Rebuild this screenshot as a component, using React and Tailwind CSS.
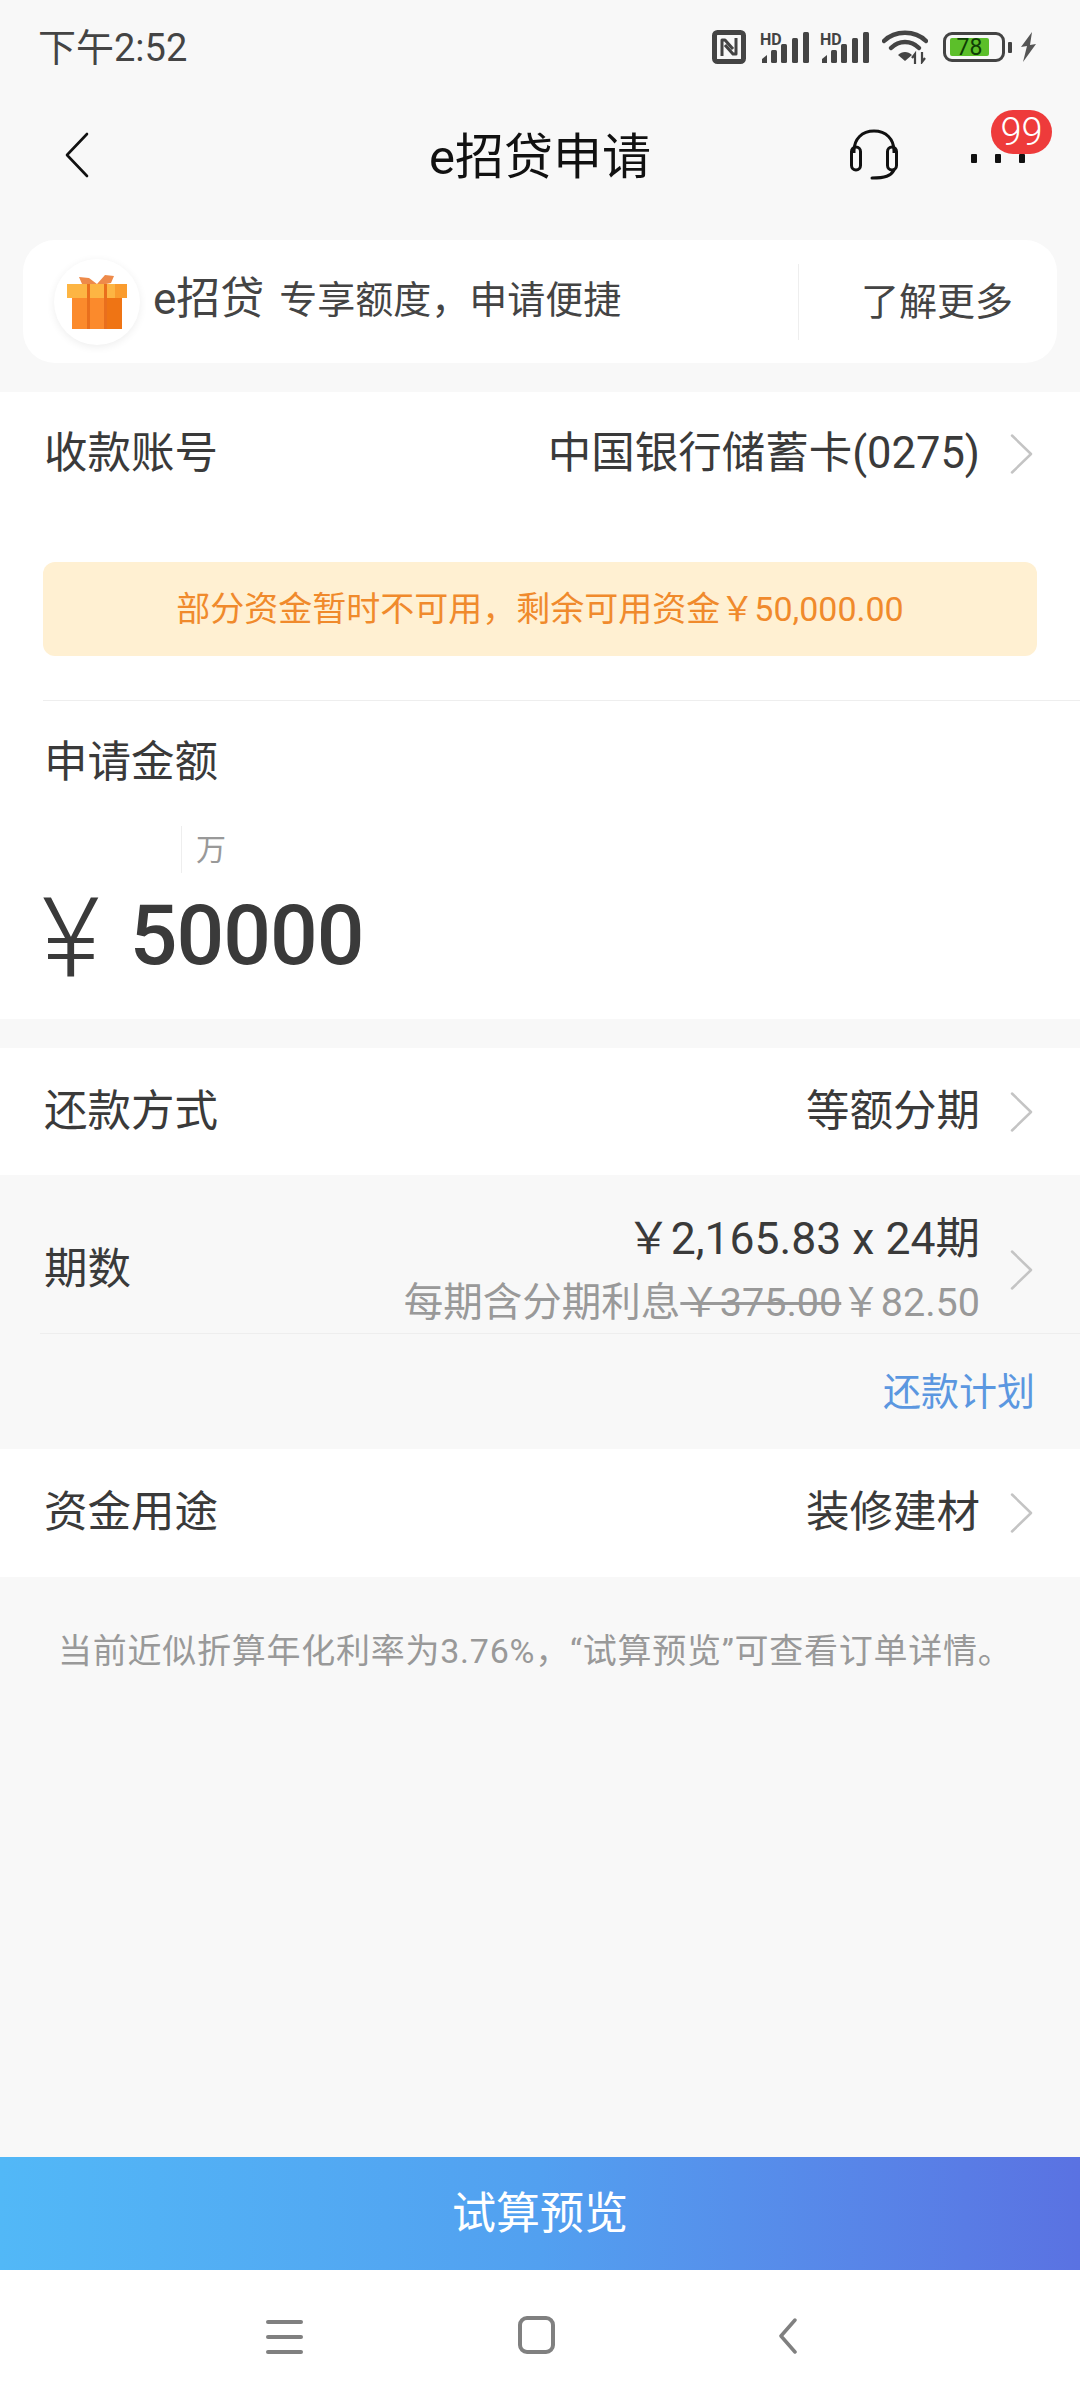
const FONT = 'font-[Roboto,"Noto_Sans_CJK_SC",sans-serif]';

function Chevron({ color = "#c4c4c4", w = 23, h = 40, sw = 2.5 }) {
  return (
    <svg width={w} height={h} viewBox={`0 0 ${w} ${h}`} fill="none" className="shrink-0">
      <path d={`M2 1.5 L${w - 2} ${h / 2} L2 ${h - 1.5}`} stroke={color} strokeWidth={sw} strokeLinecap="round" strokeLinejoin="round" />
    </svg>
  );
}

function Signal() {
  return (
    <svg width="50" height="33" viewBox="0 0 50 33" className="shrink-0">
      <text x="0" y="14" fontSize="16" fontWeight="700" fill="#444" fontFamily="Roboto">HD</text>
      <path d="M2 32 v-4 l5 -4 v8 z" fill="#444" />
      <rect x="11" y="19" width="6" height="13" rx="1.5" fill="#444" />
      <rect x="21" y="13" width="6" height="19" rx="1.5" fill="#444" />
      <rect x="32" y="7" width="6" height="25" rx="1.5" fill="#444" />
      <rect x="43" y="1" width="6" height="31" rx="1.5" fill="#444" />
    </svg>
  );
}

function StatusIcons() {
  return (
    <div className="flex items-center mr-[43px]">
      <svg width="34" height="34" viewBox="0 0 34 34" fill="none" className="shrink-0">
        <rect x="2.5" y="2.5" width="29" height="29" rx="3" stroke="#444" strokeWidth="5" />
        <path d="M10 26 V10 h3 l8 9 M24 8 V24 h-3 l-8 -9" stroke="#444" strokeWidth="3" strokeLinejoin="round" />
      </svg>
      <div className="ml-[14px]"><Signal /></div>
      <div className="ml-[10px]"><Signal /></div>
      <svg width="46" height="34" viewBox="0 0 46 34" fill="none" className="ml-[12px] shrink-0">
        <path d="M2 11 C13 0 33 0 44 11" stroke="#444" strokeWidth="4.5" strokeLinecap="round" />
        <path d="M9 18 C17 10 29 10 37 18" stroke="#444" strokeWidth="4.5" strokeLinecap="round" />
        <path d="M16 25 C20 21 26 21 30 25 L23 31 Z" fill="#444" />
        <path d="M33 34 V24 l-3 4 M40 22 v10 l3 -4" stroke="#444" strokeWidth="2.2" />
      </svg>
      <div className="ml-[15px] w-[62px] h-[30px] rounded-[9px] border-[3px] border-[#444] flex items-center pl-[4px] shrink-0">
        <div className="w-[39px] h-[18px] rounded-[2px] bg-[#5cbf2a] flex items-center justify-center text-[23px] leading-none text-[#0f3d05]">78</div>
      </div>
      <div className="ml-[3px] w-[4px] h-[11px] rounded-[1px] bg-[#444] shrink-0" />
      <svg width="17" height="30" viewBox="0 0 17 30" className="ml-[8px] shrink-0">
        <path d="M12 0 L1 15 L7 14 L3 30 L16 12 L10 13 Z" fill="#555" />
      </svg>
    </div>
  );
}

function Header() {
  return (
    <div className="flex items-center h-[122px]">
      <div className="w-[240px] pl-[65px]">
        <svg width="24" height="46" viewBox="0 0 24 46" fill="none">
          <path d="M22 2 L2 23 L22 44" stroke="#111" strokeWidth="2.6" strokeLinecap="round" strokeLinejoin="round" />
        </svg>
      </div>
      <div className="flex-1 text-center text-[49px] leading-none text-[#111] mt-[4px]">e招贷申请</div>
      <div className="w-[240px] relative flex items-center justify-end pr-[55px]">
        <svg width="50" height="52" viewBox="0 0 50 52" fill="none" className="mr-[72px] shrink-0">
          <path d="M5 24 V22 C5 10 13 2 25 2 C37 2 45 10 45 22 V24" stroke="#111" strokeWidth="3" />
          <rect x="2.5" y="18" width="9" height="23" rx="4.5" stroke="#111" strokeWidth="3" />
          <rect x="38.5" y="18" width="9" height="23" rx="4.5" stroke="#111" strokeWidth="3" />
          <path d="M45 41 C42 47 36 49 23 49" stroke="#111" strokeWidth="3" strokeLinecap="round" />
        </svg>
        <div className="flex mt-[6px] gap-[18px]">
          <div className="w-[6px] h-[9px] rounded-[1px] bg-[#111]" />
          <div className="w-[6px] h-[9px] rounded-[1px] bg-[#111]" />
          <div className="w-[6px] h-[9px] rounded-[1px] bg-[#111]" />
        </div>
        <div className="absolute left-[151px] top-[-19px] w-[61px] h-[44px] rounded-full bg-[#ee3b3b] text-white text-[38px] leading-[44px] font-light text-center">99</div>
      </div>
    </div>
  );
}

function Gift() {
  return (
    <svg width="60" height="56" viewBox="0 0 60 56" className="shrink-0">
      <path d="M12 3 L22 4 L30 10 L38 1 L47 2 L44 9 L34 11 L26 11 L15 10 Z" fill="#ee8a4a" />
      <rect x="5" y="24" width="50" height="31" fill="#fb8a2c" />
      <rect x="40" y="24" width="15" height="31" fill="#ef7414" />
      <rect x="0" y="10" width="60" height="14" fill="#fdb543" />
      <rect x="48" y="10" width="12" height="14" fill="#fa9c2e" />
      <rect x="20" y="10" width="3" height="45" fill="#e96f1d" />
      <rect x="37" y="10" width="3" height="45" fill="#e96f1d" />
    </svg>
  );
}

function Banner() {
  return (
    <div className="mx-[23px] mt-[24px] h-[123px] rounded-[32px] bg-white flex items-center">
      <div className="ml-[31px] w-[86px] h-[86px] rounded-full bg-white shadow-[0_2px_8px_rgba(0,0,0,0.07)] flex items-center justify-center shrink-0">
        <Gift />
      </div>
      <span className="ml-[13px] mb-[6px] text-[44px] leading-none text-[#444]">e招贷</span>
      <span className="ml-[15px] mb-[3px] text-[38px] leading-none text-[#444]">专享额度，申请便捷</span>
      <div className="ml-auto w-px h-[76px] bg-[#eeeeee]" />
      <div className="ml-[62px] mr-[44px] text-[38px] leading-none text-[#444] whitespace-nowrap shrink-0">了解更多</div>
    </div>
  );
}

function Row({ label, value, h = "h-[128px]" }) {
  return (
    <div className={`flex items-center ${h} bg-white pl-[44px] pr-[47px]`}>
      <span className="text-[43.5px] leading-none text-[#3a3a3a]">{label}</span>
      <span className="ml-auto text-[43.5px] leading-none text-[#3a3a3a]">{value}</span>
      <div className="ml-[30px]"><Chevron /></div>
    </div>
  );
}

function AccountSection() {
  return (
    <div className="mt-[29px] bg-white h-[627px]">
      <Row label="收款账号" value="中国银行储蓄卡(0275)" h="h-[124px]" />
      <div className="mt-[46px] mx-[43px] h-[94px] rounded-[12px] bg-[#fff0d2] flex items-center justify-center text-[34px] leading-none text-[#f08a2c]">
        部分资金暂时不可用，剩余可用资金￥50,000.00
      </div>
      <div className="mt-[44px] ml-[43px] h-px bg-[#eeeeee]" />
      <div className="h-[120px] flex items-center pl-[44px] pt-[4px] text-[43.5px] leading-none text-[#3a3a3a]">申请金额</div>
      <div className="mt-[5px] ml-[181px] h-[47px] border-l border-[#eeeeee] pl-[14px] flex items-center text-[30px] leading-none text-[#999999]">万</div>
      <div className="mt-[15px] pl-[42px] flex items-center h-[96px] text-[#3a3a3a]">
        <span className="text-[112px] leading-none font-light mt-[6px]">¥</span>
        <span className="ml-[30px] text-[84px] leading-none font-medium tracking-[-1px]">50000</span>
      </div>
    </div>
  );
}

function Periods() {
  return (
    <div className="h-[274px] flex flex-col">
      <div className="h-[158px] flex items-center pt-[32px] pl-[44px] pr-[47px]">
        <span className="text-[43.5px] leading-none text-[#3a3a3a]">期数</span>
        <div className="ml-auto flex flex-col items-end">
          <span className="text-[44.5px] leading-none text-[#3a3a3a] mt-[-1px]">￥2,165.83 x 24期</span>
          <span className="mt-[22px] text-[39.5px] leading-none text-[#999999] whitespace-nowrap">
            每期含分期利息<span className="line-through">￥375.00</span>￥82.50
          </span>
        </div>
        <div className="ml-[30px]"><Chevron /></div>
      </div>
      <div className="ml-[40px] h-px bg-[#eeeeee]" />
      <div className="flex justify-end pr-[45px] pt-[39px] text-[38px] leading-none text-[#5b97e0]">还款计划</div>
    </div>
  );
}

function Nav() {
  return (
    <div className="h-[130px] bg-white flex items-start pt-[46px] pl-[266px]">
      <div className="w-[37px] h-[34px] flex flex-col justify-between mt-[4px]">
        <div className="h-[4px] rounded-full bg-[#808080]" />
        <div className="h-[4px] rounded-full bg-[#808080]" />
        <div className="h-[4px] rounded-full bg-[#808080]" />
      </div>
      <div className="ml-[215px] w-[37px] h-[38px] rounded-[9px] border-[4px] border-[#808080]" />
      <div className="ml-[223px] mt-[2px]"><svg width="20" height="36" viewBox="0 0 20 36" fill="none"><path d="M17 2 L3 18 L17 34" stroke="#808080" strokeWidth="3.5" strokeLinecap="round" strokeLinejoin="round" /></svg></div>
    </div>
  );
}

export default function App() {
  return (
    <div className={`w-[1080px] h-[2400px] bg-[#f8f8f8] flex flex-col overflow-hidden ${FONT}`}>
      <div className="h-[94px] flex items-center justify-between pl-[38px] shrink-0">
        <span className="text-[38px] leading-none text-[#444] mt-[1px]">下午2:52</span>
        <StatusIcons />
      </div>
      <Header />
      <Banner />
      <AccountSection />
      <div className="mt-[29px]">
        <Row label="还款方式" value="等额分期" h="h-[127px]" />
      </div>
      <Periods />
      <Row label="资金用途" value="装修建材" />
      <div className="pl-[58px] pt-[56px] text-[34px] leading-[36px] tracking-[0.75px] text-[#999999] whitespace-nowrap">
        当前近似折算年化利率为3.76%，“试算预览”可查看订单详情。
      </div>
      <div className="flex-1" />
      <div className="h-[113px] bg-gradient-to-r from-[#52b8f7] via-[#52a0f0] to-[#5a72e2] flex items-center justify-center text-[44px] leading-none text-white">
        试算预览
      </div>
      <Nav />
    </div>
  );
}
